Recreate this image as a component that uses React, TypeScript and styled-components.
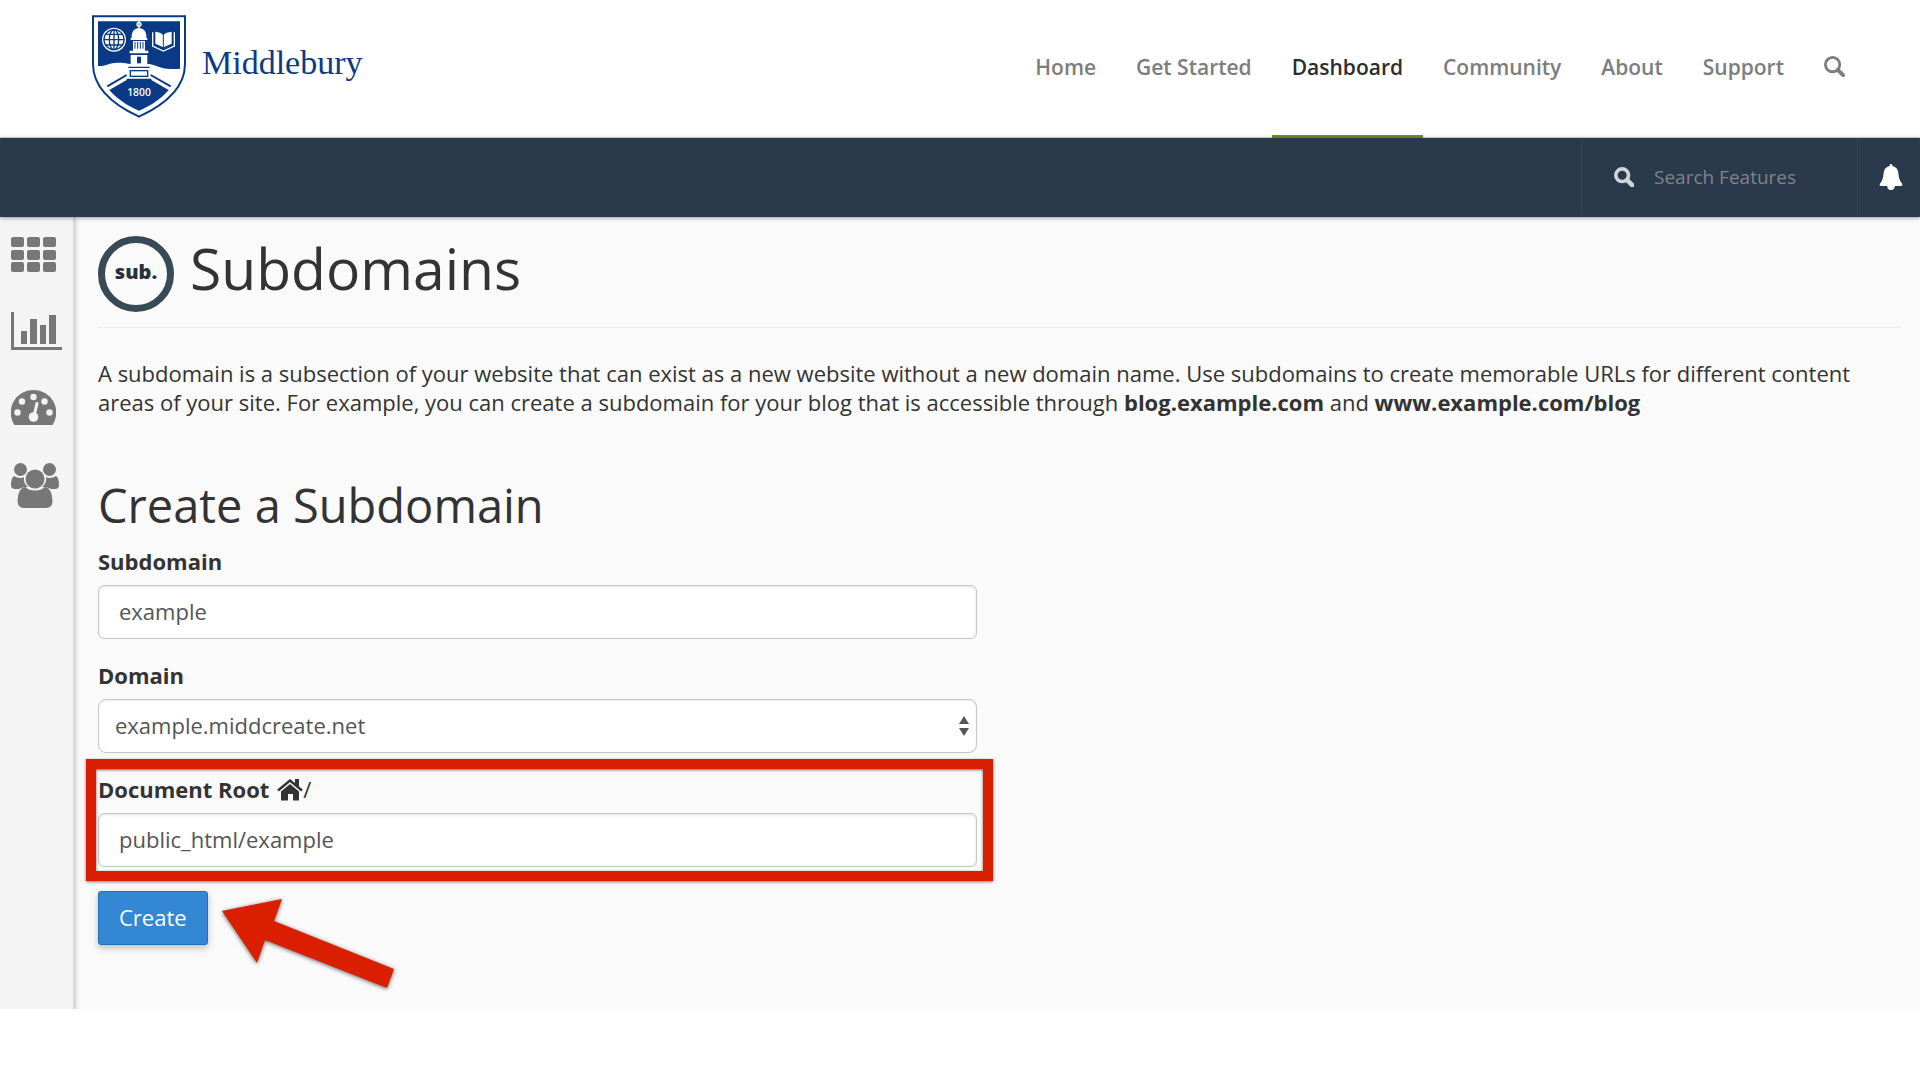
import React from "react";
import styled, { createGlobalStyle } from "styled-components";

const GlobalStyle = createGlobalStyle`
  *, *::before, *::after { box-sizing: border-box; }
  body {
    margin: 0;
    background: #fff;
    color: #333;
    font-family: "Open Sans", "Noto Sans", sans-serif;
    font-size: 22px;
    line-height: 28px;
  }
  a { color: inherit; text-decoration: none; }
  svg { display: block; }
`;

const SiteHeader = styled.header`
  display: flex;
  justify-content: space-between;
  align-items: stretch;
  height: 138px;
  padding: 0 54px 0 92px;
  border-bottom: 1px solid #d5d9d9;
`;

const Brand = styled.a`
  display: flex;
  align-items: center;
  gap: 16px;
  padding-bottom: 4px;
  color: #0a3a85;
  font-family: "Liberation Serif", serif;
  font-size: 34px;
  line-height: 40px;
`;

const BrandName = styled.span`
  padding-bottom: 8px;
`;

const SiteNav = styled.nav`
  display: flex;
  align-items: stretch;
`;

const NavLink = styled.a<{ $active?: boolean }>`
  display: flex;
  align-items: center;
  margin-bottom: -1px;
  padding: 0 20px 2px;
  border-bottom: 3px solid ${(p) => (p.$active ? "#6b9023" : "transparent")};
  color: ${(p) => (p.$active ? "#2d2d2d" : "#7d7d7d")};
  font-size: 21px;
  font-weight: 600;
`;

const SearchToggle = styled.button`
  padding: 0 21px 4px 20px;
  border: 0;
  background: none;
  color: #7d7d7d;
`;

const ToolBar = styled.div`
  position: relative;
  z-index: 1;
  display: flex;
  justify-content: flex-end;
  height: 79px;
  padding-bottom: 2px;
  background: #2a3a4c;
  box-shadow: 0 1px 4px rgba(0, 0, 0, 0.4);
`;

const FeatureSearch = styled.label`
  display: flex;
  align-items: center;
  gap: 20px;
  width: 276px;
  padding-left: 32px;
  border-left: 1px solid #31445a;
  color: #cfd5da;
`;

const SearchInput = styled.input`
  flex: 1;
  min-width: 0;
  padding: 0;
  border: 0;
  outline: 0;
  background: none;
  color: #fff;
  font: inherit;
  font-size: 19px;
  &::placeholder { color: #818487; opacity: 1; }
`;

const BellButton = styled.button`
  display: flex;
  align-items: center;
  width: 63px;
  padding: 0 0 0 21px;
  border: 0;
  border-left: 1px solid #31445a;
  background: none;
  color: #fff;
`;

const Body = styled.div`
  display: flex;
  align-items: stretch;
  background: #fafafa;
`;

const SideBar = styled.nav`
  display: flex;
  flex-direction: column;
  gap: 37px;
  flex: none;
  width: 76px;
  padding: 17px 0 0 11px;
  border-right: 3px solid #d9d9d9;
  background: #f4f4f4;
  box-shadow: 1px 0 5px rgba(0, 0, 0, 0.1);
`;

const SideLink = styled.a`
  display: flex;
  align-items: center;
  height: 40px;
  color: #777;
`;

const Main = styled.main`
  flex: 1;
  min-width: 0;
  padding: 19px 19px 64px 22px;
`;

const PageTitle = styled.h1`
  display: flex;
  align-items: flex-start;
  gap: 16px;
  margin: 0;
  padding-bottom: 15px;
  border-bottom: 1px solid #ebebeb;
  font-size: 57px;
  font-weight: 400;
  line-height: 64px;
`;

const SubBadge = styled.span`
  display: flex;
  flex: none;
  align-items: center;
  justify-content: center;
  width: 76px;
  height: 76px;
  padding-bottom: 4px;
  border: 7px solid #374a56;
  border-radius: 50%;
  color: #26333f;
  font-size: 20px;
  font-weight: 800;
  line-height: 28px;
`;

const Intro = styled.p`
  margin: 31px 0 58px;
  line-height: 29px;
`;

const SectionTitle = styled.h2`
  margin: 0 0 12px;
  font-size: 47px;
  font-weight: 400;
  line-height: 60px;
`;

const Columns = styled.div`
  display: grid;
  grid-template-columns: 1fr 1fr;
  column-gap: 46px;
`;

const Field = styled.div`
  position: relative;
  display: flex;
  flex-direction: column;
  gap: 10px;
  margin-bottom: 22px;
`;

const FieldLabel = styled.label`
  display: flex;
  align-items: center;
  font-weight: 700;
  svg { margin: 2px 0 0 8px; }
  span { font-weight: 400; }
`;

const TextBox = styled.input`
  width: 100%;
  height: 54px;
  padding: 0 20px 2px;
  border: 1px solid #c6c6c6;
  border-radius: 6px;
  outline: 0;
  background: #fff;
  box-shadow: inset 0 1px 3px rgba(0, 0, 0, 0.12);
  color: #555;
  font: inherit;
`;

const SelectWrap = styled.div`
  position: relative;
  svg {
    position: absolute;
    top: 17px;
    right: 8px;
    pointer-events: none;
  }
`;

const Select = styled.select`
  width: 100%;
  height: 54px;
  padding: 0 16px 2px;
  border: 1px solid #c6c6c6;
  border-radius: 8px;
  outline: 0;
  appearance: none;
  background: #fff;
  box-shadow: inset 0 1px 2px rgba(0, 0, 0, 0.08);
  color: #555;
  font: inherit;
`;

const Highlight = styled.div`
  position: absolute;
  inset: -16px -16px -14px -12px;
  border: 10px solid #da1f00;
  box-shadow: 0 1px 3px rgba(0, 0, 0, 0.5), inset 0 1px 3px rgba(0, 0, 0, 0.6);
  pointer-events: none;
`;

const Actions = styled.div`
  position: relative;
  margin-top: 24px;
`;

const CreateButton = styled.button`
  height: 54px;
  padding: 0 20px 2px;
  border: 1px solid #2270b8;
  border-radius: 3px;
  background: #3387d3;
  box-shadow: 0 3px 7px rgba(0, 0, 0, 0.25);
  color: #fff;
  font: inherit;
`;

const Arrow = styled.svg`
  position: absolute;
  top: 6px;
  left: 122px;
  filter: drop-shadow(0 1px 2px rgba(0, 0, 0, 0.6));
`;

function Shield() {
  return (
    <svg width="94" height="103" viewBox="36 43 282 309" fill="none" aria-hidden="true">
      <path d="M39 47H315V190C315 262 255 312 177 348C99 312 39 262 39 190Z" fill="#fff" stroke="#0a3a85" strokeWidth="6" />
      <path d="M54 62H300V204C285 206 262 206 247 202C232 197 218 191 205 190H150C130 186 108 184 90 189C76 193 66 197 54 196Z" fill="#0a3a85" />
      <path d="M140 238H214L266 268C246 292 212 316 177 330C142 316 108 292 88 268Z" fill="#0a3a85" />
      <path d="M82 257L140 223M272 257L212 223" stroke="#0a3a85" strokeWidth="6" />
      <text x="177" y="287" textAnchor="middle" fill="#fff" fontFamily="Open Sans, sans-serif" fontSize="31" fontWeight="600">1800</text>
      <circle cx="102" cy="117" r="36" fill="#fff" />
      <g stroke="#0a3a85" strokeWidth="4">
        <circle cx="102" cy="117" r="30" />
        <ellipse cx="102" cy="117" rx="14" ry="30" />
        <path d="M102 86V148M70 117H134M75 101H129M75 133H129" />
      </g>
      <g stroke="#fff" strokeWidth="4">
        <path d="M218 95V136L250 151L283 136V95" />
        <path d="M226 93L240 96Q248 99 250 106Q252 99 260 96L275 93V129L250 140L226 129Z" fill="#fff" stroke="none" />
        <path d="M250 104V141" stroke="#0a3a85" strokeWidth="3" />
      </g>
      <circle cx="177" cy="71" r="6" stroke="#fff" strokeWidth="4" />
      <path d="M177 60V92" stroke="#fff" strokeWidth="4" />
      <path d="M155 112V104Q156 84 177 82Q198 84 199 104V112Z" fill="#fff" />
      <path d="M152 112H202V118H152ZM159 121H195V150H159ZM149 150H205V158H149ZM152 163H202V200H152Z" fill="#fff" />
      <path d="M165 124V144M173 124V144M181 124V144M189 124V144" stroke="#0a3a85" strokeWidth="3" />
      <path d="M171 168H183V188H171Z" fill="#0a3a85" />
      <path d="M145 190H209V236H145Z" fill="#fff" />
      <path d="M145 200H209M140 236H214" stroke="#0a3a85" strokeWidth="4" />
      <rect x="151" y="210" width="52" height="17" stroke="#0a3a85" strokeWidth="4" />
    </svg>
  );
}

function Magnifier({ size, weight }: { size: number; weight: number }) {
  return (
    <svg width={size} height={size} viewBox="0 0 22 22" fill="none" stroke="currentColor" aria-hidden="true">
      <circle cx="9" cy="9" r={9 - weight / 2} strokeWidth={weight} />
      <path d="M14.5 14.5L20 20" strokeWidth={weight + 1} strokeLinecap="round" />
    </svg>
  );
}

function Bell() {
  return (
    <svg width="24" height="26" viewBox="0 0 24 26" fill="currentColor" aria-hidden="true">
      <path d="M12 0Q13.500 0 13.500 2Q19 3 19.500 10Q19.800 16 23 19.500Q24 22 22 22H2Q0 22 1 19.500Q4.200 16 4.500 10Q5 3 10.500 2Q10.500 0 12 0Z" />
      <path d="M8 21H16Q16 26 12 26Q8 26 8 21Z" />
    </svg>
  );
}

function GridIcon() {
  return (
    <svg width="45" height="35" viewBox="0 0 45 35" fill="currentColor" aria-hidden="true">
      {[0, 13, 25].map((y) =>
        [0, 16, 32].map((x) => <rect key={`${x}-${y}`} x={x} y={y} width="13" height="10" rx="2" />)
      )}
    </svg>
  );
}

function ChartIcon() {
  return (
    <svg width="51" height="39" viewBox="0 0 51 39" fill="currentColor" aria-hidden="true">
      <path d="M0 0H3V35H51V38H0ZM10 19H16V32H10ZM19 7H26V32H19ZM29 13H35V32H29ZM38 3H45V32H38Z" />
    </svg>
  );
}

function GaugeIcon() {
  return (
    <svg width="45" height="36" viewBox="0 0 45 36" aria-hidden="true">
      <path d="M22.500 0A22.500 22.500 0 0 1 41.500 35H3.500A22.500 22.500 0 0 1 22.500 0Z" fill="currentColor" />
      <g fill="#f4f4f4">
        <circle cx="6.500" cy="22.500" r="3.200" />
        <circle cx="11" cy="11.500" r="3.200" />
        <circle cx="22.500" cy="7" r="3.200" />
        <circle cx="33.500" cy="11.500" r="3.200" />
        <circle cx="38.500" cy="22.500" r="3.200" />
        <circle cx="22.500" cy="27" r="4.800" />
      </g>
      <path d="M23 26L26 13.500" stroke="#f4f4f4" strokeWidth="3" strokeLinecap="round" />
    </svg>
  );
}

function UsersIcon() {
  return (
    <svg width="48" height="45" viewBox="0 0 48 45" fill="currentColor" aria-hidden="true">
      <circle cx="9.500" cy="6.500" r="6.500" />
      <circle cx="38.500" cy="6.500" r="6.500" />
      <path d="M3 13Q6 15 9.500 15Q12 15 13 14Q12 20 17 24Q11 24 8 26H4Q0 26 0 22Q0 15 3 13Z" />
      <path d="M45 13Q42 15 38.500 15Q36 15 35 14Q36 20 31 24Q37 24 40 26H44Q48 26 48 22Q48 15 45 13Z" />
      <circle cx="24" cy="16" r="9.500" />
      <path d="M14 24Q18 27.500 24 27.500Q30 27.500 34 24Q41 25 41.500 38Q41.500 45 35 45H13Q6.500 45 6.500 38Q7 25 14 24Z" />
    </svg>
  );
}

function HomeIcon() {
  return (
    <svg width="26" height="22" viewBox="0 0 26 22" aria-hidden="true">
      <path d="M1 11.500L13 1.500L25 11.500" fill="none" stroke="#333" strokeWidth="2.400" />
      <path d="M18 0H22V8L18 5ZM13 5L22 12.500V21.500H16V15H11V21.500H4V12.500Z" fill="#333" />
    </svg>
  );
}

const pages = ["Home", "Get Started", "Dashboard", "Community", "About", "Support"];

const tools = [
  { name: "Home", icon: <GridIcon /> },
  { name: "Statistics", icon: <ChartIcon /> },
  { name: "Dashboard", icon: <GaugeIcon /> },
  { name: "User Manager", icon: <UsersIcon /> },
];

export default function App() {
  return (
    <>
      <GlobalStyle />
      <SiteHeader>
        <Brand href="#">
          <Shield />
          <BrandName>Middlebury</BrandName>
        </Brand>
        <SiteNav>
          {pages.map((page) => (
            <NavLink key={page} href="#" $active={page === "Dashboard"}>
              {page}
            </NavLink>
          ))}
          <SearchToggle type="button" aria-label="Search">
            <Magnifier size={21} weight={3} />
          </SearchToggle>
        </SiteNav>
      </SiteHeader>
      <ToolBar>
        <FeatureSearch>
          <Magnifier size={20} weight={4} />
          <SearchInput type="text" placeholder="Search Features" aria-label="Search Features" />
        </FeatureSearch>
        <BellButton type="button" aria-label="Notifications">
          <Bell />
        </BellButton>
      </ToolBar>
      <Body>
        <SideBar>
          {tools.map((tool) => (
            <SideLink key={tool.name} href="#" aria-label={tool.name}>
              {tool.icon}
            </SideLink>
          ))}
        </SideBar>
        <Main>
          <PageTitle>
            <SubBadge>sub.</SubBadge>
            Subdomains
          </PageTitle>
          <Intro>
            A subdomain is a subsection of your website that can exist as a new website without a new domain name. Use
            subdomains to create memorable URLs for different content areas of your site. For example, you can create a
            subdomain for your blog that is accessible through <strong>blog.example.com</strong> and{" "}
            <strong>www.example.com/blog</strong>
          </Intro>
          <SectionTitle>Create a Subdomain</SectionTitle>
          <Columns>
            <form onSubmit={(e) => e.preventDefault()}>
              <Field>
                <FieldLabel htmlFor="subdomain">Subdomain</FieldLabel>
                <TextBox id="subdomain" type="text" defaultValue="example" />
              </Field>
              <Field>
                <FieldLabel htmlFor="domain">Domain</FieldLabel>
                <SelectWrap>
                  <Select id="domain">
                    <option>example.middcreate.net</option>
                  </Select>
                  <svg width="10" height="20" viewBox="0 0 10 20" fill="#555" aria-hidden="true">
                    <path d="M5 0L10 8H0ZM0 12H10L5 20Z" />
                  </svg>
                </SelectWrap>
              </Field>
              <Field>
                <FieldLabel htmlFor="root">
                  Document Root
                  <HomeIcon />
                  <span>/</span>
                </FieldLabel>
                <TextBox id="root" type="text" defaultValue="public_html/example" />
                <Highlight />
              </Field>
              <Actions>
                <CreateButton type="submit">Create</CreateButton>
                <Arrow width="176" height="92" viewBox="0 0 176 92" aria-hidden="true">
                  <path d="M2 14L62 2L54 24L174 72L167 91L45 43L37 66Z" fill="#da1f00" />
                </Arrow>
              </Actions>
            </form>
          </Columns>
        </Main>
      </Body>
    </>
  );
}
